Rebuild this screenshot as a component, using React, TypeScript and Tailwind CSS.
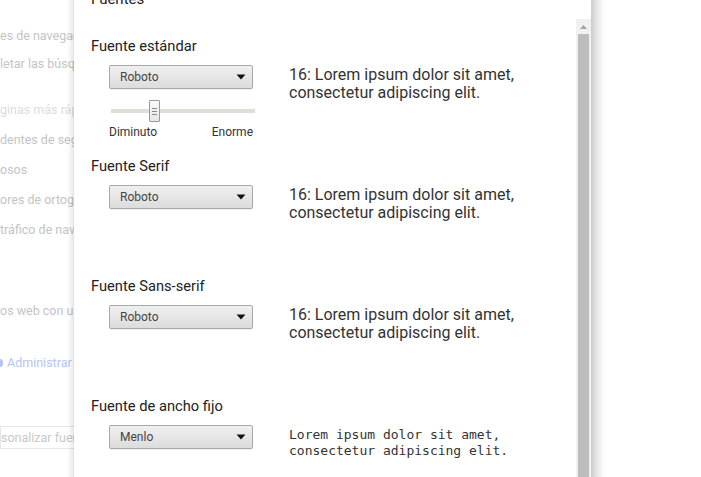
import React from 'react';

const bgLines = [
  { text: 'es de navegación', top: 'mt-[27px]', color: 'text-[#c4c4c4]' },
  { text: 'letar las búsquedas', top: 'mt-[10px]', color: 'text-[#c4c4c4]' },
  { text: 'ginas más rápido', top: 'mt-[28px]', color: 'text-[#dcdcdc]' },
  { text: 'dentes de seguridad', top: 'mt-[12px]', color: 'text-[#c4c4c4]' },
  { text: 'osos', top: 'mt-[12px]', color: 'text-[#c4c4c4]' },
  { text: 'ores de ortografía', top: 'mt-[12px]', color: 'text-[#c4c4c4]' },
  { text: 'tráfico de navegación', top: 'mt-[12px]', color: 'text-[#c4c4c4]' },
  { text: 'os web con un', top: 'mt-[63px]', color: 'text-[#c4c4c4]' },
];

const FontSelect = ({ value }: { value: string }) => (
  <div className="w-[144px] h-[24px] flex items-center justify-between pl-[10px] pr-[6px] border border-[#a8a8a8] rounded-[2px] bg-gradient-to-b from-[#f0f0f0] to-[#dcdcdc] shadow-[0_1px_0_rgba(0,0,0,0.06)]">
    <span className="text-[12px] text-[#444]">{value}</span>
    <svg width="10" height="6" viewBox="0 0 10 6">
      <path d="M0.5 0.5 L9.5 0.5 L5 5.5 Z" fill="#111" />
    </svg>
  </div>
);

const Preview = ({ mono }: { mono?: boolean }) =>
  mono ? (
    <div className="pt-[2px] text-[13px] leading-[16px] text-[#333] font-['DejaVu_Sans_Mono',monospace]">
      Lorem ipsum dolor sit amet,
      <br />
      consectetur adipiscing elit.
    </div>
  ) : (
    <div className="pt-[1px] text-[16px] leading-[18px] text-[#333]">
      16: Lorem ipsum dolor sit amet,
      <br />
      consectetur adipiscing elit.
    </div>
  );

const Section = ({
  title,
  value,
  mono,
  slider,
}: {
  title: string;
  value: string;
  mono?: boolean;
  slider?: boolean;
}) => (
  <div className="h-[120px] shrink-0 flex flex-col">
    <div className="text-[14.7px] leading-[20px] text-[#222]">{title}</div>
    <div className="flex mt-[9px] pl-[18px]">
      <div className="w-[180px] flex flex-col">
        <FontSelect value={value} />
        {slider && (
          <div className="w-[146px] flex flex-col">
            <div className="relative h-[22px] mt-[11px] flex items-center">
              <div className="ml-[2px] w-[144px] h-[4px] bg-[#e2ddd6]" />
              <div className="absolute left-[40px] top-0 w-[11px] h-[22px] border border-[#9a9a9a] rounded-[1px] bg-gradient-to-b from-[#fafafa] to-[#e6e6e6] flex flex-col items-center justify-center gap-[2px]">
                <div className="w-[5px] h-px bg-[#8a8a8a]" />
                <div className="w-[5px] h-px bg-[#8a8a8a]" />
                <div className="w-[5px] h-px bg-[#8a8a8a]" />
              </div>
            </div>
            <div className="flex justify-between mt-[3px] text-[12px] leading-[14px] text-[#333] w-[144px]">
              <span>Diminuto</span>
              <span>Enorme</span>
            </div>
          </div>
        )}
      </div>
      <Preview mono={mono} />
    </div>
  </div>
);

export default function App() {
  return (
    <div className="relative w-[701px] h-[477px] overflow-hidden bg-white font-['Roboto',sans-serif]">
      {/* background settings page */}
      <div className="flex flex-col text-[12.5px] leading-[18px] whitespace-nowrap">
        {bgLines.map((l, i) => (
          <div key={i} className={`${l.top} ${l.color}`}>
            {l.text}
          </div>
        ))}
        <div className="mt-[34px] flex items-center gap-[4px] text-[#b5c4f0]">
          <span className="w-[3px] h-[8px] bg-[#b5c4f0] rounded-r-full" />
          <span>Administrar certificados</span>
        </div>
        <div className="mt-[54px] w-[120px] h-[23px] border border-[#e6e6e6] flex items-center text-[#c8c8c8]">
          sonalizar fuentes
        </div>
      </div>

      {/* dialog */}
      <div className="absolute left-[74px] top-[-14px] w-[517px] h-[520px] bg-white shadow-[6px_0_10px_rgba(0,0,0,0.2),-2px_0_6px_rgba(0,0,0,0.12)] flex flex-col">
        <div className="h-[33px] shrink-0 pl-[17px] pt-[4px] text-[15px] leading-[18px] text-[#222]">Fuentes</div>
        <div className="flex flex-1 min-h-0">
          <div className="flex-1 pl-[17px] pt-[17px] flex flex-col overflow-hidden">
            <Section title="Fuente estándar" value="Roboto" slider />
            <Section title="Fuente Serif" value="Roboto" />
            <Section title="Fuente Sans-serif" value="Roboto" />
            <Section title="Fuente de ancho fijo" value="Menlo" mono />
          </div>
          <div className="w-[15px] shrink-0 bg-[#f1f1f1] flex flex-col items-center">
            <svg width="7" height="4" viewBox="0 0 7 4" className="mt-[6px]">
              <path d="M3.5 0 L7 4 L0 4 Z" fill="#a3a3a3" />
            </svg>
            <div className="mt-[5px] w-[11px] flex-1 bg-[#bdbdbd]" />
          </div>
        </div>
      </div>
    </div>
  );
}
